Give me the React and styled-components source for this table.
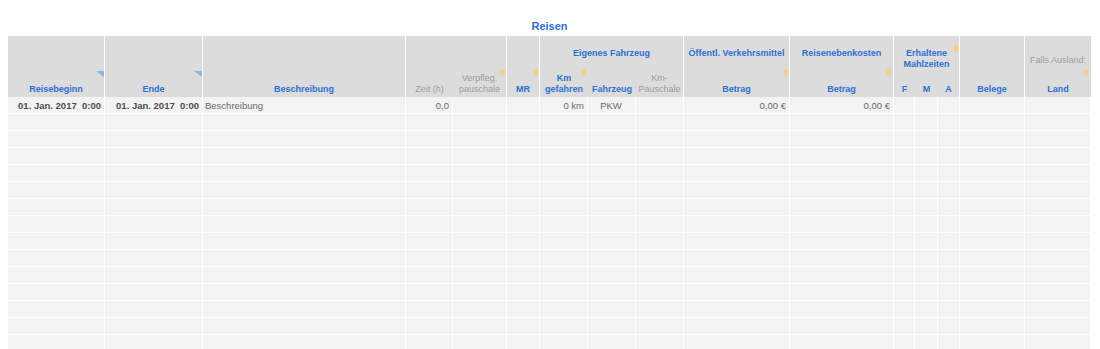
import React from 'react';
import styled, { createGlobalStyle } from 'styled-components';

const COLS = '97px 98px 203px 47px 54px 33px 48px 48px 48px 106px 104px 21px 23px 22px 65px 66px';
const BLUE = '#2d6fd4';

const GlobalStyle = createGlobalStyle`
  html, body {
    margin: 0;
    background: #fff;
    font-family: 'Liberation Sans', Arial, Helvetica, sans-serif;
  }
`;

const Page = styled.div`
  padding: 0 8px;
  height: 349px;
  overflow: hidden;
`;

const Title = styled.div`
  height: 36px;
  box-sizing: border-box;
  display: flex;
  align-items: flex-end;
  justify-content: center;
  padding-bottom: 4px;
  width: 1083px;
  color: ${BLUE};
  font-size: 11px;
  font-weight: bold;
`;

const Table = styled.div`
  width: 1083px;
`;

const Head = styled.div`
  display: grid;
  grid-template-columns: ${COLS};
  grid-template-rows: 36px 25px;
  background: #dcdcdc;
`;

const HeadCell = styled.div`
  position: relative;
  grid-column: ${p => p.$col};
  grid-row: ${p => p.$row || '1 / 3'};
  box-sizing: border-box;
  display: flex;
  flex-direction: column;
  justify-content: ${p => (p.$top !== undefined ? 'flex-start' : 'flex-end')};
  padding-top: ${p => p.$top || 0}px;
  padding-bottom: ${p => (p.$top !== undefined ? 0 : 2)}px;
  border-right: ${p => (p.$sep ? '1px solid #fff' : 'none')};
  text-align: center;
  font-size: 9px;
  line-height: 11px;
  font-weight: ${p => (p.$muted ? 'normal' : 'bold')};
  color: ${p => (p.$muted ? '#9d9d9d' : BLUE)};
  white-space: nowrap;
`;

const Corner = styled.span`
  position: absolute;
  top: 35px;
  right: 0;
  width: 0;
  height: 0;
  border-top: 6px solid #8db6e6;
  border-left: 8px solid transparent;
`;

const Dot = styled.span`
  position: absolute;
  top: ${p => p.$y}px;
  right: ${p => p.$r || 1}px;
  width: 5px;
  height: 7px;
  border-radius: 4px 0 0 4px;
  background: #f6cf86;
  opacity: 0.85;
`;

const Row = styled.div`
  display: grid;
  grid-template-columns: ${COLS};
  height: 17px;
  border-bottom: 1px solid #fff;
  box-sizing: border-box;
`;

const Cell = styled.div`
  box-sizing: border-box;
  background: #f3f3f3;
  border-right: 1px solid #fff;
  padding: 0 3px 0 2px;
  display: flex;
  align-items: center;
  justify-content: ${p => ({ right: 'flex-end', center: 'center' }[p.$align] || 'flex-start')};
  font-size: 9.5px;
  font-weight: ${p => (p.$strong ? 'bold' : 'normal')};
  color: ${p => (p.$strong ? '#4c4c4c' : '#6a6a6a')};
  white-space: nowrap;
  overflow: hidden;
`;

const first = [
  { v: '01. Jan. 2017\u00a0\u00a00:00', align: 'right', strong: true },
  { v: '01. Jan. 2017\u00a0\u00a00:00', align: 'right', strong: true },
  { v: 'Beschreibung' },
  { v: '0,0', align: 'right' },
  { v: '' },
  { v: '' },
  { v: '0 km', align: 'right' },
  { v: 'PKW', align: 'center' },
  { v: '' },
  { v: '0,00 €', align: 'right' },
  { v: '0,00 €', align: 'right' },
  { v: '' }, { v: '' }, { v: '' }, { v: '' }, { v: '' },
];

const empty = Array.from({ length: 16 }, () => ({ v: '' }));
const rows = [first, ...Array.from({ length: 14 }, () => empty)];

const TableHead = () => (
  <Head>
    <HeadCell $col="1" $sep>Reisebeginn<Corner /></HeadCell>
    <HeadCell $col="2" $sep>Ende<Corner /></HeadCell>
    <HeadCell $col="3" $sep>Beschreibung</HeadCell>
    <HeadCell $col="4" $muted>Zeit (h)</HeadCell>
    <HeadCell $col="5" $muted $sep>
      <span>Verpfleg.</span><span>pauschale</span>
      <Dot $y={33} />
    </HeadCell>
    <HeadCell $col="6" $sep>MR<Dot $y={33} /></HeadCell>

    <HeadCell $col="7 / 10" $row="1" $top={12} $sep>Eigenes Fahrzeug</HeadCell>
    <HeadCell $col="7" $row="2">
      <span>Km</span><span>gefahren</span>
      <Dot $y={-3} $r={2} />
    </HeadCell>
    <HeadCell $col="8" $row="2">Fahrzeug</HeadCell>
    <HeadCell $col="9" $row="2" $muted $sep>
      <span>Km-</span><span>Pauschale</span>
    </HeadCell>

    <HeadCell $col="10" $row="1" $top={12} $sep>
      Öffentl. Verkehrsmittel
      <Dot $y={33} />
    </HeadCell>
    <HeadCell $col="10" $row="2" $sep>Betrag</HeadCell>

    <HeadCell $col="11" $row="1" $top={12} $sep>
      Reisenebenkosten
      <Dot $y={33} $r={2} />
    </HeadCell>
    <HeadCell $col="11" $row="2" $sep>Betrag</HeadCell>

    <HeadCell $col="12 / 15" $row="1" $top={12} $sep>
      <span>Erhaltene</span><span>Mahlzeiten</span>
      <Dot $y={9} />
    </HeadCell>
    <HeadCell $col="12" $row="2">F</HeadCell>
    <HeadCell $col="13" $row="2">M</HeadCell>
    <HeadCell $col="14" $row="2" $sep>A</HeadCell>

    <HeadCell $col="15" $sep>Belege</HeadCell>

    <HeadCell $col="16" $row="1" $top={19} $muted>
      Falls Ausland:
      <Dot $y={33} $r={2} />
    </HeadCell>
    <HeadCell $col="16" $row="2">Land</HeadCell>
  </Head>
);

const App = () => (
  <Page>
    <GlobalStyle />
    <Title>Reisen</Title>
    <Table>
      <TableHead />
      {rows.map((r, i) => (
        <Row key={i}>
          {r.map((c, j) => (
            <Cell key={j} $align={c.align} $strong={c.strong}>{c.v}</Cell>
          ))}
        </Row>
      ))}
    </Table>
  </Page>
);

export default App;
